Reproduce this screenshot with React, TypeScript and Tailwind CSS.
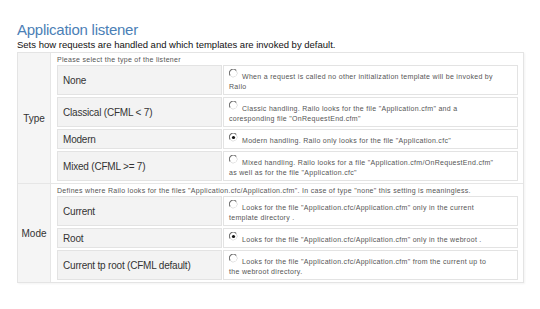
import React from "react";

const Radio = ({ checked }: { checked?: boolean }) => (
  <svg width="9" height="9" viewBox="0 0 9 9" className="inline-block relative -top-[3px] mr-[4px] align-top">
    <path d="M1.3 6.5 A3.7 3.7 0 0 1 7.2 1.6" fill="none" stroke="#6f6f6f" strokeWidth="1.2" />
    <path d="M7.2 1.6 A3.7 3.7 0 0 1 1.3 6.5" fill="none" stroke="#d8d8d8" strokeWidth="1" />
    <circle cx="4.5" cy="4.5" r="3" fill="#fff" />
    {checked && <circle cx="4.5" cy="4.5" r="1.6" fill="#111" />}
  </svg>
);

type Row = { label: string; checked?: boolean; lines: string[] };

const RowItem = ({ r }: { r: Row }) => (
  <div className="flex gap-[1px]">
    <div className="w-[165px] shrink-0 bg-[#f3f3f3] border border-[#e3e3e3] flex items-center pl-[5px] text-[10px] tracking-[-0.2px] text-[#333]">
      {r.label}
    </div>
    <div className="flex-1 bg-white border border-[#e3e3e3] px-[5px] pt-[6px] pb-[2px] text-[7px] leading-[10px] tracking-[0.3px] text-[#555]">
      <Radio checked={r.checked} />
      {r.lines.map((l, i) => (
        <React.Fragment key={i}>
          {i > 0 && <br />}
          {l}
        </React.Fragment>
      ))}
    </div>
  </div>
);

const Section = ({ title, note, rows }: { title: string; note: string; rows: Row[] }) => (
  <div className="flex">
    <div className="w-[33px] shrink-0 bg-[#f5f5f5] border-r border-[#e6e6e6] flex items-center justify-center text-[10px] text-[#333]">
      {title}
    </div>
    <div className="flex-1 pl-[6px] pr-[5px] pt-[2px] pb-[2px]">
      <div className="text-[7px] leading-[10px] tracking-[0.3px] text-[#555]">{note}</div>
      <div className="flex flex-col gap-[2px]">
        {rows.map((r, i) => (
          <RowItem key={i} r={r} />
        ))}
      </div>
    </div>
  </div>
);

export default function App() {
  const typeRows: Row[] = [
    { label: "None", lines: ["When a request is called no other initialization template will be invoked by", "Railo"] },
    { label: "Classical (CFML < 7)", lines: ["Classic handling. Railo looks for the file \"Application.cfm\" and a", "coresponding file \"OnRequestEnd.cfm\""] },
    { label: "Modern", checked: true, lines: ["Modern handling. Railo only looks for the file \"Application.cfc\""] },
    { label: "Mixed (CFML >= 7)", lines: ["Mixed handling. Railo looks for a file \"Application.cfm/OnRequestEnd.cfm\"", "as well as for the file \"Application.cfc\""] },
  ];
  const modeRows: Row[] = [
    { label: "Current", lines: ["Looks for the file \"Application.cfc/Application.cfm\" only in the current", "template directory ."] },
    { label: "Root", checked: true, lines: ["Looks for the file \"Application.cfc/Application.cfm\" only in the webroot ."] },
    { label: "Current tp root (CFML default)", lines: ["Looks for the file \"Application.cfc/Application.cfm\" from the current up to", "the webroot directory."] },
  ];
  return (
    <div className="w-[540px] h-[309px] bg-white pl-[17px] pt-[21px]" style={{ fontFamily: '"Liberation Sans", Arial, sans-serif' }}>
      <h1 className="text-[15px] leading-[18px] tracking-[-0.25px] text-[#4b80b6]">Application listener</h1>
      <p className="text-[9.5px] leading-[12px] text-[#111]">Sets how requests are handled and which templates are invoked by default.</p>
      <div className="w-[507px] mt-[1px] border border-[#e4e4e4] shadow-[1px_1px_2px_rgba(0,0,0,0.05)]">
        <Section title="Type" note="Please select the type of the listener" rows={typeRows} />
        <div className="border-t border-[#e6e6e6]">
          <Section
            title="Mode"
            note={"Defines where Railo looks for the files \"Application.cfc/Application.cfm\". In case of type \"none\" this setting is meaningless."}
            rows={modeRows}
          />
        </div>
      </div>
    </div>
  );
}
